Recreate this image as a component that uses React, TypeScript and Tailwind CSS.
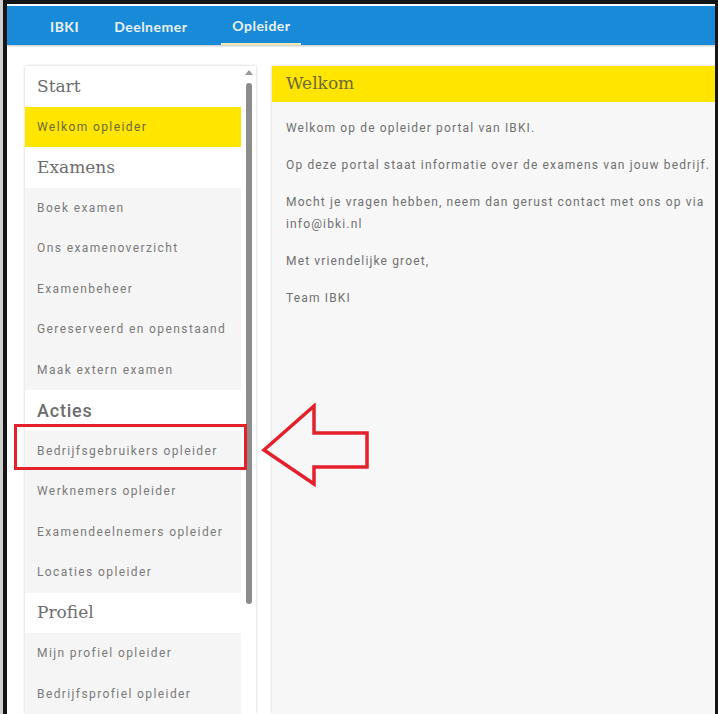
import React from 'react'

type Entry = { label: string; kind: 'head' | 'item' | 'active'; sans?: boolean }

const MENU: Entry[] = [
  { label: 'Start', kind: 'head' },
  { label: 'Welkom opleider', kind: 'active' },
  { label: 'Examens', kind: 'head' },
  { label: 'Boek examen', kind: 'item' },
  { label: 'Ons examenoverzicht', kind: 'item' },
  { label: 'Examenbeheer', kind: 'item' },
  { label: 'Gereserveerd en openstaand', kind: 'item' },
  { label: 'Maak extern examen', kind: 'item' },
  { label: 'Acties', kind: 'head', sans: true },
  { label: 'Bedrijfsgebruikers opleider', kind: 'item' },
  { label: 'Werknemers opleider', kind: 'item' },
  { label: 'Examendeelnemers opleider', kind: 'item' },
  { label: 'Locaties opleider', kind: 'item' },
  { label: 'Profiel', kind: 'head' },
  { label: 'Mijn profiel opleider', kind: 'item' },
  { label: 'Bedrijfsprofiel opleider', kind: 'item' },
]

const SERIF = { fontFamily: '"DejaVu Serif", "Liberation Serif", serif' }

function MenuRow({ e }: { e: Entry }) {
  if (e.kind === 'head') {
    return (
      <div
        className={
          'h-[40.5px] flex items-center px-3 bg-white text-[#6d6d6d] ' +
          (e.sans ? 'text-[18px] font-medium font-[Roboto,sans-serif] tracking-[0.8px]' : 'text-[17px]')
        }
        style={e.sans ? undefined : SERIF}
      >
        {e.label}
      </div>
    )
  }
  return (
    <div
      className={
        'h-[40.5px] flex items-center px-3 text-[12px] tracking-[1.4px] font-[Roboto,sans-serif] ' +
        (e.kind === 'active' ? 'bg-[#ffe500] text-[#6b6a3a]' : 'bg-[#f5f5f5] text-[#7a7a7a]')
      }
    >
      {e.label}
    </div>
  )
}

export default function App() {
  return (
    <div className="w-[718px] h-[714px] overflow-hidden bg-[#cfcfcf] pl-[3px]">
      <div className="h-full flex flex-col border-l-4 border-t-4 border-r-[3px] border-[#151515] bg-white overflow-hidden">
        {/* Top nav */}
        <div className="pt-[2px] bg-white">
          <div className="h-[39px] bg-[#198ad8] flex items-stretch pl-[35px] shadow-[0_1px_2px_rgba(0,0,0,0.25)] font-[Lato,sans-serif] font-bold text-[14px] text-[#e9f2fa] tracking-[0.5px]">
            <div className="px-[8px] pt-[2px] flex items-center">IBKI</div>
            <div className="pl-[27px] pr-[34px] pt-[2px] flex items-center">Deelnemer</div>
            <div className="w-[80px] pt-[2px] flex items-center justify-center border-b-2 border-[#f3eab0]">Opleider</div>
          </div>
        </div>

        {/* Body */}
        <div className="flex-1 flex gap-[16px] pl-[18px] pt-[21px] min-h-0">
          {/* Sidebar */}
          <div className="relative w-[231px] shrink-0 bg-white shadow-[0_0_3px_rgba(0,0,0,0.2)] flex">
            <div className="w-[216px] flex flex-col">
              {MENU.map((e) => (
                <MenuRow key={e.label} e={e} />
              ))}
            </div>
            <div className="flex-1 flex flex-col items-center pt-[4px]">
              <div className="w-0 h-0 border-l-[4px] border-r-[4px] border-b-[5px] border-l-transparent border-r-transparent border-b-[#9a9a9a]" />
              <div className="mt-[8px] w-[6px] h-[521px] rounded-full bg-[#8c8c8c]" />
            </div>
          </div>

          {/* Main panel */}
          <div className="flex-1 min-w-[450px] bg-[#f7f7f7] shadow-[0_0_3px_rgba(0,0,0,0.2)] flex flex-col">
            <div className="h-[36px] bg-[#ffe500] flex items-center px-[14px] text-[17px] text-[#6b6a3a]" style={SERIF}>
              Welkom
            </div>
            <div className="px-[14px] pt-[15px] text-[12px] leading-[22px] tracking-[1.15px] text-[#707070] font-[Roboto,sans-serif] flex flex-col gap-[15px] whitespace-nowrap">
              <p>Welkom op de opleider portal van IBKI.</p>
              <p>Op deze portal staat informatie over de examens van jouw bedrijf.</p>
              <p>
                Mocht je vragen hebben, neem dan gerust contact met ons op via
                <br />
                info@ibki.nl
              </p>
              <p>Met vriendelijke groet,</p>
              <p>Team IBKI</p>
            </div>
          </div>
        </div>
      </div>

      {/* Red annotation overlay */}
      <div className="absolute left-[14px] top-[424px] w-[233px] h-[46px] border-[3px] border-[#e3202b]" />
      <svg className="absolute left-[261px] top-[403px]" width="110" height="84" viewBox="0 0 110 84">
        <polygon
          points="3,47 53,3 53,30 106,30 106,64 53,64 53,81"
          fill="none"
          stroke="#e3202b"
          strokeWidth="3.5"
          strokeLinejoin="miter"
        />
      </svg>
    </div>
  )
}
